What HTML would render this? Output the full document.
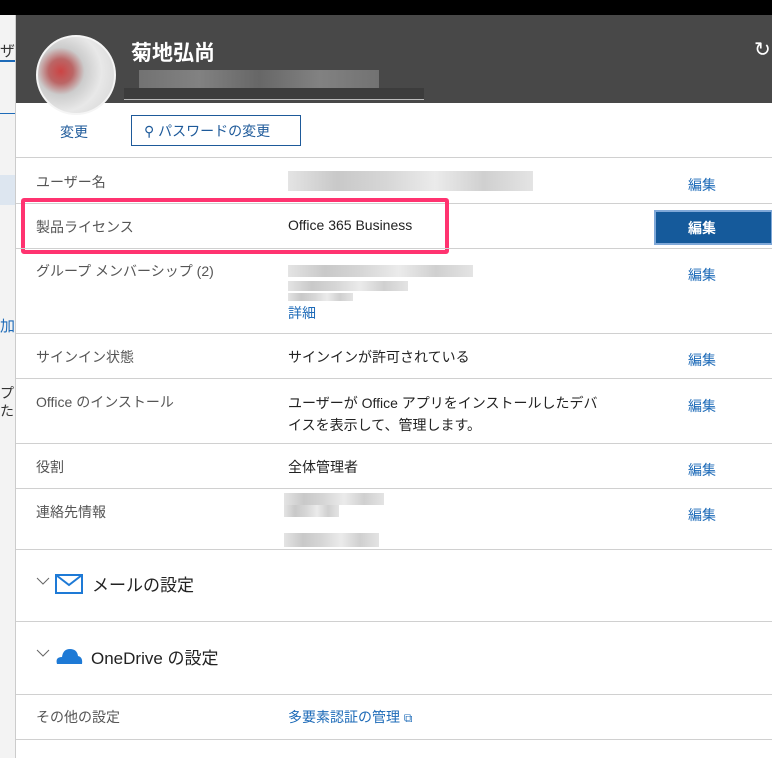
<!DOCTYPE html>
<html><head><meta charset="utf-8"><style>
*{margin:0;padding:0;box-sizing:border-box}
body{width:772px;height:758px;overflow:hidden;background:#f3f3f3;font-family:"Liberation Sans","Noto Sans CJK JP",sans-serif;position:relative;color:#222}
.top{position:absolute;left:0;top:0;width:772px;height:15px;background:#000}
.panel{position:absolute;left:15px;top:15px;width:757px;height:743px;background:#fff;border-left:1px solid #ccc}
.hdr{position:absolute;left:0;top:0;width:757px;height:88px;background:#484848}
.abs{position:absolute}
.lbl{position:absolute;left:20px;font-size:14px;color:#555}
.val{position:absolute;left:272px;font-size:14px;color:#222}
.ed{position:absolute;left:672px;font-size:14px;color:#1e6bb8}
.line{position:absolute;left:0;width:757px;height:1px;background:#d0d0d0}
.blur{position:absolute;background:linear-gradient(90deg,#ddd,#bbb,#ccc,#e6e6e6,#c4c4c4,#ddd);opacity:.8}
</style></head><body>
<div class="top"></div>
<div class="abs" style="left:0;top:40px;font-size:15px;color:#333">ザ</div>
<div class="abs" style="left:0;top:60px;width:15px;height:2px;background:#1e6bb8"></div>
<div class="abs" style="left:0;top:113px;width:15px;height:1px;background:#1e6bb8"></div>
<div class="abs" style="left:0;top:175px;width:15px;height:30px;background:#dde6f0"></div>
<div class="abs" style="left:0;top:315px;font-size:15px;color:#1e6bb8">加</div>
<div class="abs" style="left:0;top:384px;font-size:14px;color:#333;line-height:18px">プ<br>た</div>
<div class="panel">
<div class="hdr"></div>
<div class="abs" style="left:20px;top:20px;width:80px;height:80px;border-radius:50%;background:radial-gradient(circle at 30% 45%,#c44 0,#b66 18%,#ccc 35%,#e8e8e8 60%,#ddd 80%);border:2px solid #f5f5f5"></div>
<div class="abs" style="left:115px;top:22px;font-size:21px;color:#fff;font-weight:bold">菊地弘尚</div>
<div class="abs" style="left:123px;top:55px;width:240px;height:18px;background:linear-gradient(90deg,#777,#888,#6a6a6a,#888,#777);opacity:.9"></div>
<div class="abs" style="left:108px;top:73px;width:300px;height:12px;background:#3c3c3c;border-bottom:1px solid #bbb"></div>
<div class="abs" style="left:738px;top:22px;font-size:20px;color:#fff">↻</div>
<div class="abs" style="left:44px;top:107px;font-size:14px;color:#1e5a9a">変更</div>
<div class="abs" style="left:115px;top:100px;width:170px;height:31px;border:1px solid #1e5a9a;font-size:14px;color:#1e5a9a;padding:5px 0 0 12px">⚲ パスワードの変更</div>
<div class="line" style="top:142px"></div>
<div class="lbl" style="top:157px">ユーザー名</div>
<div class="blur" style="left:272px;top:156px;width:245px;height:20px"></div>
<div class="ed" style="top:160px">編集</div>
<div class="line" style="top:188px"></div>
<div class="lbl" style="top:202px">製品ライセンス</div>
<div class="val" style="top:202px">Office 365 Business</div>
<div class="abs" style="left:638px;top:195px;width:119px;height:35px;background:#155a9b;border:2px solid #7fa8d8;color:#fff;font-size:14px;font-weight:bold;padding:6px 0 0 32px">編集</div>
<div class="abs" style="left:5px;top:183px;width:428px;height:56px;border:4px solid #ff3370;border-radius:3px"></div>
<div class="line" style="top:233px"></div>
<div class="lbl" style="top:246px">グループ メンバーシップ (2)</div>
<div class="blur" style="left:272px;top:250px;width:185px;height:12px"></div>
<div class="blur" style="left:272px;top:266px;width:120px;height:10px"></div>
<div class="blur" style="left:272px;top:278px;width:65px;height:8px"></div>
<div class="abs" style="left:272px;top:288px;font-size:14px;color:#1e6bb8">詳細</div>
<div class="ed" style="top:250px">編集</div>
<div class="line" style="top:318px"></div>
<div class="lbl" style="top:332px">サインイン状態</div>
<div class="val" style="top:332px">サインインが許可されている</div>
<div class="ed" style="top:335px">編集</div>
<div class="line" style="top:363px"></div>
<div class="lbl" style="top:377px">Office のインストール</div>
<div class="val" style="top:377px;line-height:22px">ユーザーが Office アプリをインストールしたデバ<br>イスを表示して、管理します。</div>
<div class="ed" style="top:381px">編集</div>
<div class="line" style="top:428px"></div>
<div class="lbl" style="top:442px">役割</div>
<div class="val" style="top:442px">全体管理者</div>
<div class="ed" style="top:445px">編集</div>
<div class="line" style="top:473px"></div>
<div class="lbl" style="top:487px">連絡先情報</div>
<div class="blur" style="left:268px;top:478px;width:100px;height:12px"></div>
<div class="blur" style="left:268px;top:490px;width:55px;height:12px"></div>
<div class="blur" style="left:268px;top:518px;width:95px;height:14px"></div>
<div class="ed" style="top:490px">編集</div>
<div class="line" style="top:534px"></div>
<svg class="abs" style="left:20px;top:561px" width="14" height="10"><path d="M1 2 L7 8 L13 2" fill="none" stroke="#666" stroke-width="1"/></svg>
<svg class="abs" style="left:39px;top:559px" width="28" height="20"><rect x="1" y="1" width="26" height="18" fill="none" stroke="#1e7ad6" stroke-width="2"/><path d="M1 1 L14 11 L27 1" fill="none" stroke="#1e7ad6" stroke-width="2"/></svg>
<div class="abs" style="left:76px;top:556px;font-size:17px;color:#222">メールの設定</div>
<div class="line" style="top:606px"></div>
<svg class="abs" style="left:20px;top:633px" width="14" height="10"><path d="M1 2 L7 8 L13 2" fill="none" stroke="#666" stroke-width="1"/></svg>
<svg class="abs" style="left:39px;top:630px" width="28" height="20"><path d="M2 19 Q0 12 7 12 Q8 4 15 4 Q22 4 23 11 Q28 12 27 19 Z" fill="#1e7ad6"/></svg>
<div class="abs" style="left:75px;top:629px;font-size:17px;color:#222">OneDrive の設定</div>
<div class="line" style="top:679px"></div>
<div class="lbl" style="top:692px">その他の設定</div>
<div class="abs" style="left:272px;top:692px;font-size:14px;color:#1e6bb8">多要素認証の管理 <span style="font-size:12px">⧉</span></div>
<div class="line" style="top:724px"></div>
</div>
</body></html>
